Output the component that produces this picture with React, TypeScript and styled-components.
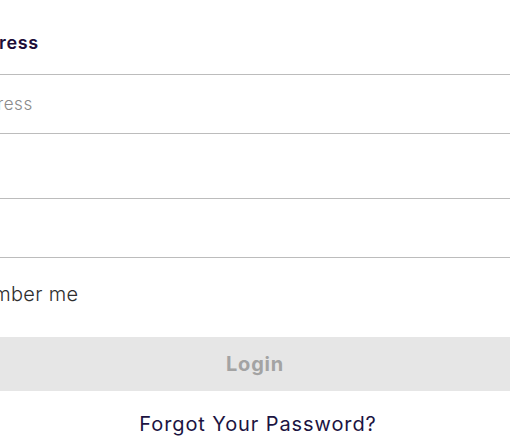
import React from "react";
import styled, { createGlobalStyle } from "styled-components";

const Global = createGlobalStyle`
  html, body { margin: 0; padding: 0; background: #ffffff; overflow: hidden; }
  body { font-family: "Inter", "Open Sans", sans-serif; }
`;

const Page = styled.div`
  display: flex;
  justify-content: center;
  padding-top: 30px;
  width: 510px;
`;

const Form = styled.form`
  flex: 0 0 auto;
  width: 720px;
  display: flex;
  flex-direction: column;
`;

const Field = styled.div<{ $first?: boolean }>`
  display: flex;
  flex-direction: column;
  margin-top: ${(p) => (p.$first ? 0 : 20)}px;
`;

const Label = styled.label`
  font-size: 18px;
  line-height: 26px;
  font-weight: 600;
  letter-spacing: 0.7px;
  color: #200d38;
  margin: 0 0 18px 11px;
  white-space: nowrap;
`;

const Input = styled.input`
  box-sizing: border-box;
  height: 60px;
  border: none;
  border-top: 1px solid #bcbcbc;
  border-bottom: 1px solid #bcbcbc;
  padding: 0 0 0 20px;
  font-family: inherit;
  font-size: 17px;
  letter-spacing: 0.6px;
  color: #333;
  background: #fff;
  outline: none;
  &::placeholder { color: #8a8a8a; font-weight: 300; }
`;

const Remember = styled.label`
  display: flex;
  align-items: center;
  gap: 12px;
  margin: 24px 0 0 12px;
  height: 24px;
  font-size: 20px;
  font-weight: 300;
  letter-spacing: 0.3px;
  color: #2e2e2e;
  white-space: nowrap;
`;

const Check = styled.span`
  width: 20px;
  height: 20px;
  border: 1px solid #bcbcbc;
  box-sizing: border-box;
`;

const LoginButton = styled.button`
  margin-top: 31px;
  height: 54px;
  border: none;
  background: #e6e6e6;
  color: #a3a3a3;
  font-family: inherit;
  font-size: 20px;
  font-weight: 700;
  letter-spacing: 0.8px;
`;

const Forgot = styled.a`
  margin-top: 21px;
  padding-left: 6px;
  line-height: 24px;
  text-align: center;
  font-size: 20px;
  letter-spacing: 0.9px;
  color: #1c1442;
  text-decoration: none;
`;

export default function App() {
  return (
    <>
      <Global />
      <Page>
        <Form onSubmit={(e) => e.preventDefault()}>
          <Field $first>
            <Label>Email Address</Label>
            <Input type="email" placeholder="Email address" />
          </Field>
          <Field>
            <Label>Password</Label>
            <Input type="password" />
          </Field>
          <Remember>
            <Check />
            Remember me
          </Remember>
          <LoginButton type="submit">Login</LoginButton>
          <Forgot href="#">Forgot Your Password?</Forgot>
        </Form>
      </Page>
    </>
  );
}
